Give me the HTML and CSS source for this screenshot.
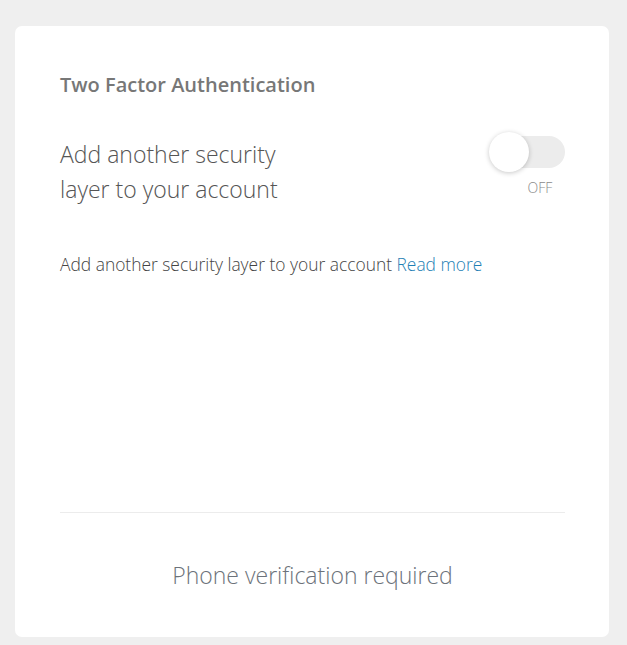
FILE: index.html
```html
<html lang="en">
<head>
    <title>Two Factor Authentication</title>
    <link rel="stylesheet" href="styles.css">
</head>
<body>
    <div class="card">
        <div class="card-body">
            <div class="card-title">Two Factor Authentication</div>
            <div class="setting-row">
                <div class="setting-label">Add another security<br>layer to your account</div>
                <div class="toggle">
                    <input type="checkbox" id="tfa-switch"><!--Invisible checkbox-->
                    <label for="tfa-switch" class="switch"></label>
                    <span class="switch-state">OFF</span>
                </div>
            </div>
            <p class="description">Add another security layer to your account <a href="#">Read more</a></p>
        </div>
        <div class="card-footer">Phone verification required</div>
    </div>
</body>
</html>
```

FILE: styles.css
```css
body {
    margin: 0;
    background: #efefef;
    font-family: "Open Sans", sans-serif;
}

/*Card*/
.card {
    margin: 26px 18px 0 15px;
    height: 611px;
    background: #fff;
    border-radius: 7px;
    display: flex;
    flex-direction: column;
}

.card-body {
    flex: 1;
    padding: 46px 44px 0 45px;
}

.card-title {
    font-size: 20px;
    font-weight: 600;
    color: #777;
    line-height: 26px;
}

.setting-row {
    display: flex;
    justify-content: space-between;
    margin-top: 38px;
}

.setting-label {
    font-size: 23px;
    font-weight: 300;
    color: #555;
    line-height: 35px;
    margin-top: 1px;
}

/*Toggle switch*/
.toggle {
    display: flex;
    flex-direction: column;
    align-items: flex-end;
}

.toggle input[type="checkbox"] {
    display: none;
}

label.switch {
    position: relative;
    display: block;
    width: 75px;
    height: 32px;
    background: #ececec;
    border-radius: 16px;
}

label.switch:after {
    content: '';
    position: absolute;
    top: -4px;
    left: -1px;
    width: 40px;
    height: 40px;
    background: #fff;
    border-radius: 50%;
    box-shadow: 0 1px 5px rgba(0, 0, 0, 0.22);
}

.switch-state {
    margin-top: 10px;
    width: 50px;
    text-align: center;
    font-size: 14px;
    font-weight: 300;
    color: #8a8a8a;
}

.description {
    margin: 45px 0 0;
    font-size: 17.4px;
    font-weight: 300;
    color: #444;
    line-height: 24px;
}

.description a {
    color: #1f7fb5;
    text-decoration: none;
}

/*Footer*/
.card-footer {
    margin: 0 44px 0 45px;
    border-top: 1px solid #ececec;
    height: 124px;
    display: flex;
    align-items: center;
    justify-content: center;
    font-size: 23px;
    font-weight: 300;
    color: #6c727a;
}
```
